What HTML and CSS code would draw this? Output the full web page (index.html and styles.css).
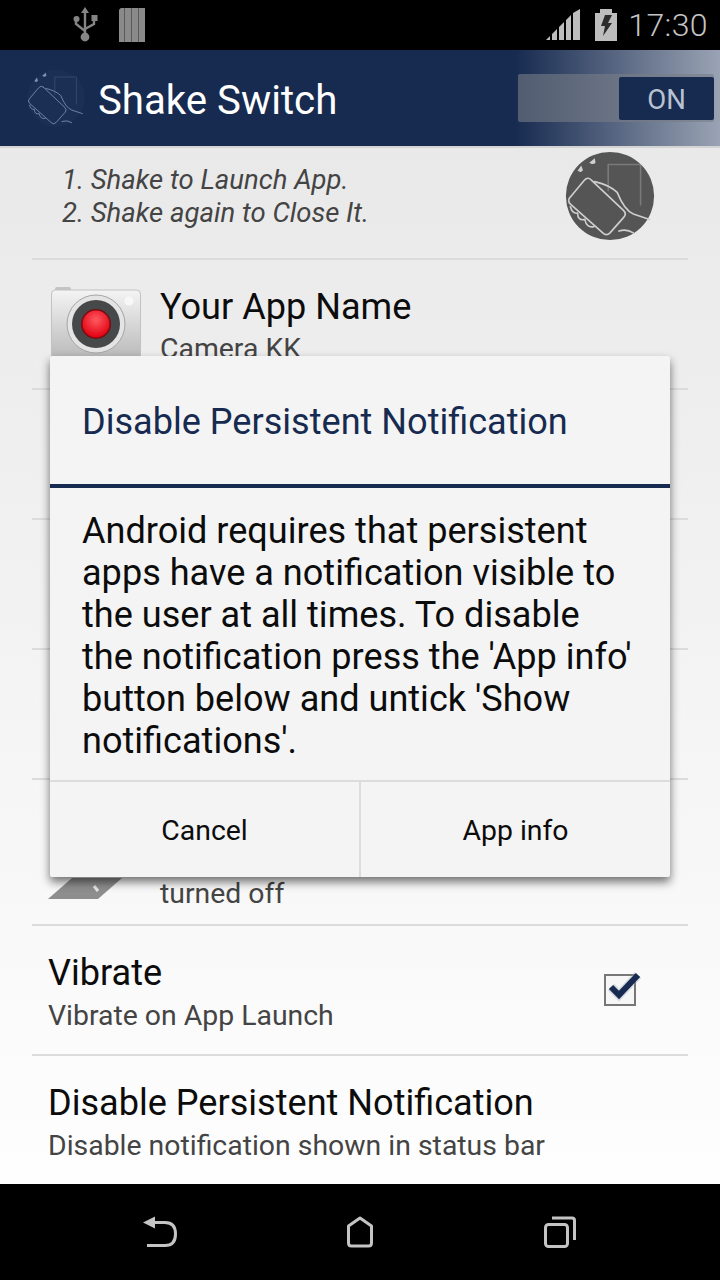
FILE: index.html
```html
<!DOCTYPE html>
<html lang="en">
<head>
<meta charset="UTF-8">
<meta name="viewport" content="width=device-width, initial-scale=1.0">
<title>Shake Switch</title>
<link rel="stylesheet" href="styles.css">
</head>
<body>

<svg class="defs" width="0" height="0">
  <symbol id="shake" viewBox="0 0 100 100">
    <g fill="none" stroke="currentColor" stroke-linecap="round" stroke-linejoin="round">
      <path d="M29 32 L65 66 Q69 70 65 74 L50 91 Q46 95 42 91 L6 59 Q2 55 6 51 L21 33 Q25 28 29 32 Z"/>
      <path d="M33 34 Q50 38 58 46 Q66 66 76 70 L94 76"/>
      <path d="M6 62 Q8 70 14 69 Q14 78 22 76 Q24 86 32 84"/>
      <path d="M60 89 Q68 86 76 91"/>
      <path d="M48 44 L48 15 L84 15 L84 60" opacity=".3"/>
    </g>
    <path d="M14 22 L18 16 L20 21 Q18 25 14 22 Z M27 13 L33 8 L34 13 Q31 16 27 13 Z" fill="currentColor"/>
  </symbol>
</svg>

<div class="screen">

  <div class="status-bar">
    <svg class="icon-usb" width="26" height="36" viewBox="0 0 26 36">
      <g fill="none" stroke="#858585" stroke-width="2.4">
        <path d="M12 4 V30"/>
        <path d="M3 13 V17 L12 24"/>
        <path d="M21 12 V17 L12 22"/>
      </g>
      <g fill="#858585">
        <path d="M12 0 L16 6 H8 Z"/>
        <circle cx="3.5" cy="12" r="3"/>
        <rect x="18.5" y="8" width="6" height="6"/>
        <circle cx="12" cy="30" r="4.4"/>
      </g>
    </svg>
    <svg class="icon-sd" width="28" height="34" viewBox="0 0 28 34">
      <path fill="#5a5a5a" d="M1 2 L3 0 H27 V34 H1 Z"/>
      <path fill="#8a8a8a" d="M1 2 L3 0 H6 V34 H1 Z M7 0 H13 V34 H7 Z M14 0 H20 V34 H14 Z M21 0 H27 V34 H21 Z"/>
    </svg>

    <div class="status-right">
      <svg width="35" height="32" viewBox="0 0 35 32">
        <path fill="#bdbdbd" d="M0 31 L4 27 V31 Z M6 25 L11 20 V31 H6 Z M13 18 L18 13 V31 H13 Z M20 11 L25 6 V31 H20 Z M27 4 L34 0 V31 H27 Z"/>
      </svg>
      <svg class="icon-battery" width="22" height="32" viewBox="0 0 22 32">
        <path fill="#bdbdbd" d="M5 0 H17 V4 H22 V32 H0 V4 H5 Z"/>
        <path fill="#2b2b2b" d="M10 6 H17 L13 14 H17 L8 27 L10 17 H6 Z"/>
      </svg>
      <span class="clock">17:30</span>
    </div>
  </div>

  <header class="app-bar">
    <svg class="app-logo" width="60" height="60" viewBox="0 0 100 100">
      <circle cx="50" cy="50" r="48" fill="#1b2f55"/>
      <use href="#shake" width="100" height="100"/>
    </svg>
    <h1 class="app-title">Shake Switch</h1>
    <div class="toggle">
      <span class="toggle-knob">ON</span>
    </div>
  </header>

  <main class="content">
    <div class="intro">
      <p class="intro-text">1. Shake to Launch App.<br>2. Shake again to Close It.</p>
      <svg class="intro-icon" width="90" height="90" viewBox="0 0 100 100">
        <circle cx="50" cy="50" r="49" fill="#555"/>
        <use href="#shake" width="100" height="100"/>
      </svg>
    </div>

    <div class="row row-app">
      <svg class="app-icon" width="90" height="92" viewBox="0 0 90 92">
        <defs>
          <linearGradient id="camBody" x1="0" y1="0" x2="0" y2="1">
            <stop offset="0" stop-color="#f4f4f4"/>
            <stop offset="1" stop-color="#a8a8a8"/>
          </linearGradient>
          <radialGradient id="camRed" cx="50%" cy="35%" r="65%">
            <stop offset="0" stop-color="#ff5a62"/>
            <stop offset="1" stop-color="#e0000f"/>
          </radialGradient>
        </defs>
        <rect x="4" y="0" width="16" height="6" rx="2" fill="#c4c4c4"/>
        <rect x="0.5" y="3" width="89" height="89" rx="4" fill="url(#camBody)" stroke="#c2c2c2"/>
        <circle cx="78" cy="14" r="4.5" fill="#f7f7f7"/>
        <circle cx="45" cy="37" r="29" fill="#e4e4e4" stroke="#a5a5a5"/>
        <circle cx="45" cy="37" r="24" fill="#46484a"/>
        <circle cx="45" cy="37" r="15" fill="#7c0a10"/>
        <circle cx="45" cy="37" r="13.5" fill="url(#camRed)"/>
      </svg>
      <div class="row-text">
        <div class="row-title">Your App Name</div>
        <div class="row-sub">Camera KK</div>
      </div>
    </div>

    <div class="row"></div>
    <div class="row"></div>
    <div class="row"></div>

    <div class="row row-tall">
      <svg class="fold-icon" width="74" height="40" viewBox="0 0 74 40">
        <path fill="#8e8e8e" d="M24 19 H74 L50 40 H0 Z"/>
        <path fill="none" stroke="#e6e6e6" stroke-width="3" d="M46 27 L50 32"/>
      </svg>
      <div class="row-sub row-sub-end">turned off</div>
    </div>

    <div class="row row-plain">
      <div class="row-text">
        <div class="row-title">Vibrate</div>
        <div class="row-sub">Vibrate on App Launch</div>
      </div>
      <svg class="check" width="40" height="36" viewBox="0 0 40 36">
        <rect x="1" y="5" width="30" height="30" fill="#f6f6f6" stroke="#777" stroke-width="2"/>
        <path d="M7 17 L15 25 L34 5" fill="none" stroke="#9aa4b8" stroke-width="9" opacity=".35"/>
        <path d="M7 17 L15 25 L34 5" fill="none" stroke="#172b50" stroke-width="6"/>
      </svg>
    </div>

    <div class="row row-plain row-last">
      <div class="row-text">
        <div class="row-title">Disable Persistent Notification</div>
        <div class="row-sub">Disable notification shown in status bar</div>
      </div>
    </div>
  </main>

  <nav class="nav-bar">
    <div class="nav-item">
      <svg width="34" height="32" viewBox="0 0 34 32">
        <path d="M11 6.5 H22 Q32.5 6.5 32.5 18 Q32.5 29.5 22 29.5 H4" fill="none" stroke="#c4c4c4" stroke-width="3"/>
        <path d="M0 6.5 L12 0.5 V12.5 Z" fill="#c4c4c4"/>
      </svg>
    </div>
    <div class="nav-item">
      <svg width="26" height="32" viewBox="0 0 26 32">
        <path d="M13 2 L24.5 10 V27 Q24.5 30 21.5 30 H4.5 Q1.5 30 1.5 27 V10 Z" fill="none" stroke="#c4c4c4" stroke-width="3" stroke-linejoin="round"/>
      </svg>
    </div>
    <div class="nav-item">
      <svg width="32" height="32" viewBox="0 0 32 32">
        <rect x="1.5" y="8.5" width="22" height="22" rx="3" fill="none" stroke="#c4c4c4" stroke-width="3"/>
        <path d="M8 2 H28 Q30.5 2 30.5 4.5 V24" fill="none" stroke="#c4c4c4" stroke-width="3"/>
      </svg>
    </div>
  </nav>

  <div class="dialog">
    <div class="dialog-title">Disable Persistent Notification</div>
    <div class="dialog-body">Android requires that persistent apps have a notification visible to the user at all times. To disable the notification press the 'App info' button below and untick 'Show notifications'.</div>
    <div class="dialog-buttons">
      <div class="dialog-button">Cancel</div>
      <div class="dialog-button">App info</div>
    </div>
  </div>

</div>

</body>
</html>
```

FILE: styles.css
```css
* {
  box-sizing: border-box;
}
body {
  margin: 0;
  font-family: Roboto, "Liberation Sans", sans-serif;
  background-color: #000;
}
.defs {
  position: absolute;
}
.screen {
  position: relative;
  display: flex;
  flex-direction: column;
  width: 720px;
  height: 1280px;
  overflow: hidden;
}

/* status bar */
.status-bar {
  display: flex;
  align-items: center;
  height: 50px;
  padding: 0 12px 0 73px;
  background-color: #000;
}
.icon-usb {
  margin-top: -1px;
}
.icon-sd {
  margin-left: 19px;
}
.status-right {
  display: flex;
  align-items: center;
  margin-left: auto;
}
.icon-battery {
  margin-left: 14px;
}
.clock {
  margin-left: 11px;
  font-size: 32px;
  font-weight: 300;
  color: #c4c4c4;
  letter-spacing: 0.4px;
}

/* action bar */
.app-bar {
  display: flex;
  align-items: center;
  height: 98px;
  padding: 0 6px 0 26px;
  background: linear-gradient(90deg, #172b50 0, #172b50 515px, #9aa3b4 720px);
  border-bottom: 2px solid #d4d4d4;
}
.app-logo {
  color: #7f90b0;
  stroke-width: 1.4;
}
.app-title {
  margin: 4px 0 0 12px;
  font-size: 40.2px;
  font-weight: 400;
  color: #fff;
}
.toggle {
  display: flex;
  justify-content: flex-end;
  align-items: center;
  width: 196px;
  height: 48px;
  margin-left: auto;
  background-color: rgba(120, 125, 135, 0.6);
  border-radius: 2px;
}
.toggle-knob {
  display: flex;
  justify-content: center;
  align-items: center;
  width: 95px;
  height: 43px;
  padding-top: 3px;
  font-size: 27.5px;
  color: #b9c2d3;
  background-color: #172b50;
  border-radius: 2px;
}

/* list */
.content {
  flex: 1;
  overflow: hidden;
  padding: 0 32px;
  background: linear-gradient(180deg, #e9e9e9 0, #fefefe 100%);
}
.intro {
  display: flex;
  justify-content: space-between;
  height: 112px;
  padding: 15px 33px 0 30px;
  border-bottom: 2px solid #dcdcdc;
}
.intro-text {
  margin: 0;
  font-size: 27.5px;
  font-style: italic;
  line-height: 33px;
  color: #444;
}
.intro-icon {
  margin-top: -12px;
  color: #cfcfcf;
  stroke-width: 1.8;
  filter: blur(0.7px);
}
.row {
  display: flex;
  height: 130px;
  border-bottom: 2px solid #dcdcdc;
}
.row-app {
  padding: 27px 0 0 19px;
}
.row-text {
  padding-top: 25px;
}
.row-app .row-text {
  margin: -2px 0 0 19px;
  padding-top: 0;
}
.row-app .row-sub {
  margin-top: 1px;
}
.row-title {
  font-size: 36.1px;
  line-height: 44px;
  color: #0c0c0c;
}
.row-sub {
  margin-top: 2px;
  font-size: 28.4px;
  line-height: 38px;
  color: #444;
}
.row-tall {
  align-items: flex-end;
  height: 146px;
  padding: 0 0 25px 16px;
}
.row-sub-end {
  margin: 0 0 -14px 38px;
}
.row-plain {
  justify-content: space-between;
  padding: 0 47px 0 16px;
}
.row-last {
  border-bottom: none;
}
.check {
  margin: 44px -3px 0 0;
}

/* nav bar */
.nav-bar {
  display: flex;
  justify-content: space-between;
  align-items: center;
  height: 96px;
  padding: 0 140px;
  background-color: #000;
}
.nav-item {
  display: flex;
  justify-content: center;
  width: 40px;
}

/* dialog */
.dialog {
  position: absolute;
  left: 50px;
  top: 356px;
  width: 620px;
  height: 521px;
  background-color: #f4f4f4;
  border-radius: 2px;
  box-shadow: 0 5px 10px rgba(0, 0, 0, 0.55);
}
.dialog-title {
  display: flex;
  align-items: center;
  height: 132px;
  padding: 4px 32px 0;
  font-size: 36.1px;
  color: #172b50;
  border-bottom: 4px solid #172b50;
}
.dialog-body {
  height: 292px;
  padding: 22px 33px 0 32px;
  font-size: 36.1px;
  line-height: 42px;
  color: #0c0c0c;
}
.dialog-buttons {
  display: flex;
  height: 97px;
  border-top: 2px solid #dcdcdc;
}
.dialog-button {
  flex: 1;
  display: flex;
  justify-content: center;
  align-items: center;
  padding-top: 2px;
  font-size: 28.4px;
  color: #0c0c0c;
}
.dialog-button + .dialog-button {
  border-left: 2px solid #dcdcdc;
}
```
